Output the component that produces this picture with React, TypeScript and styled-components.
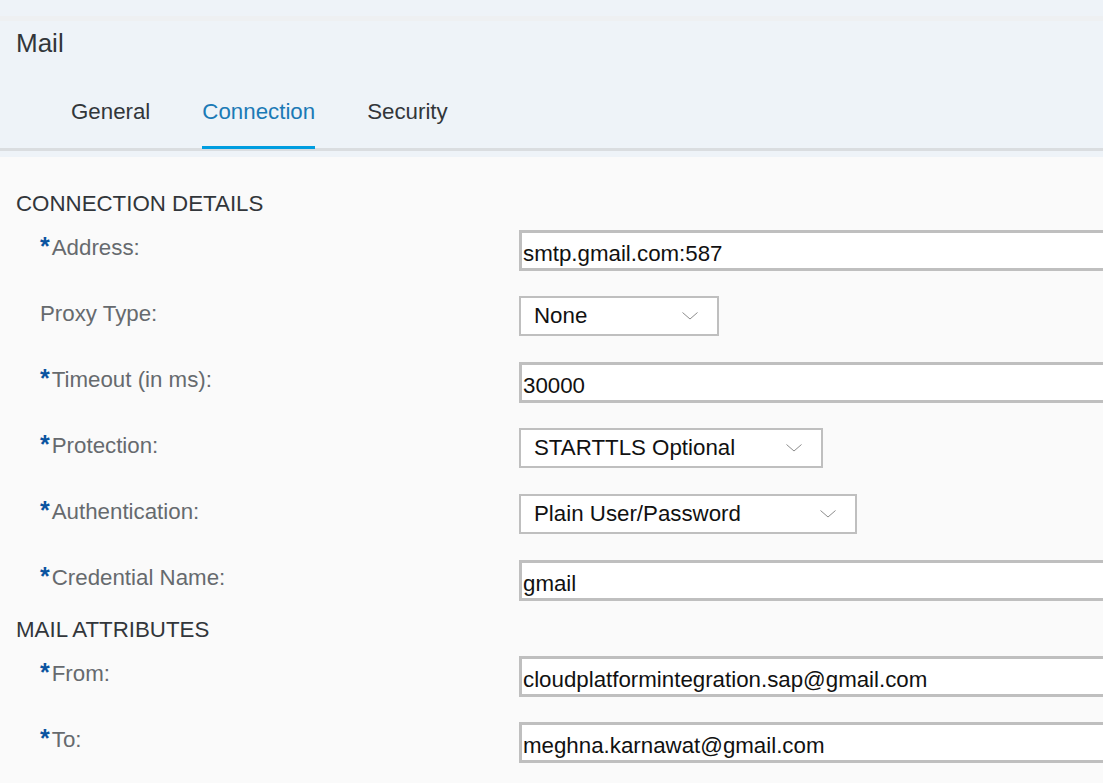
import React from 'react';
import styled, { createGlobalStyle } from 'styled-components';

const GlobalStyle = createGlobalStyle`
  html, body {
    margin: 0;
    padding: 0;
    background: #fafafa;
    overflow: hidden;
  }
  body {
    font-family: "Liberation Sans", Arial, sans-serif;
  }
`

const Page = styled.div`
  width: 1103px;
  height: 783px;
  overflow: hidden;
  background: #fafafa;
`

const ShellStrip = styled.div`
  height: 16px;
  background: #eef3f8;
  border-bottom: 5px solid #eef0f2;
`

const Header = styled.header`
  background: #eef3f8;
  padding: 6px 0 6px;
`

const Title = styled.h1`
  margin: 0 0 40px 16px;
  font-size: 26px;
  line-height: 32px;
  font-weight: 400;
  color: #32363a;
`

const TabBar = styled.nav`
  display: flex;
  gap: 52px;
  padding-left: 71px;
  border-bottom: 3px solid #dadde0;
`

const Tab = styled.div<{ $active?: boolean }>`
  font-size: 22.3px;
  line-height: 26px;
  padding-bottom: 21px;
  margin-bottom: -1px;
  color: ${(p) => (p.$active ? '#1b7ab6' : '#32363a')};
  border-bottom: 3px solid ${(p) => (p.$active ? '#009de0' : 'transparent')};
`

const Content = styled.main`
  padding-top: 34px;
`

const Section = styled.section<{ $gap?: number }>`
  margin-top: ${(p) => p.$gap || 0}px;
`

const Heading = styled.h2`
  margin: 0 0 13px 16px;
  font-size: 22.3px;
  line-height: 26px;
  font-weight: 400;
  color: #32363a;
  text-transform: uppercase;
`

const FormGrid = styled.div`
  display: grid;
  grid-template-columns: 479px 1fr;
  row-gap: 25px;
  padding-left: 40px;
`

const Label = styled.label`
  padding-top: 5px;
  font-size: 22.3px;
  line-height: 26px;
  color: #666a6e;
`

const Required = styled.span`
  display: inline-block;
  margin-right: 2px;
  font-size: 25px;
  line-height: 20px;
  font-weight: 700;
  color: #0b54a0;
`

const Field = styled.div`
  min-width: 0;
  height: 41px;
`

const TextInput = styled.input`
  box-sizing: border-box;
  display: block;
  width: calc(100% + 40px);
  height: 41px;
  margin: 0;
  padding: 6px 1px 0;
  border: 3px solid #bfbfbf;
  border-radius: 0;
  background: #fff;
  font-family: "Liberation Sans", Arial, sans-serif;
  font-size: 22.3px;
  color: #111;
  outline: none;
`

const SelectBox = styled.div<{ $width: number }>`
  box-sizing: border-box;
  display: flex;
  align-items: center;
  justify-content: space-between;
  width: ${(p) => p.$width}px;
  height: 40px;
  padding: 0 19px 1px 13px;
  border: 2px solid #bfbfbf;
  background: #fff;
  font-size: 22.3px;
  color: #111;
`

const Chevron = () => (
  <svg width="16" height="8" viewBox="0 0 16 8">
    <polyline points="0.5,0.5 8,7 15.5,0.5" fill="none" stroke="#8c8c8c" strokeWidth="1" />
  </svg>
)

type Row = {
  label: string;
  required?: boolean;
  value: string;
  select?: number;
}

const connectionRows: Row[] = [
  { label: 'Address:', required: true, value: 'smtp.gmail.com:587' },
  { label: 'Proxy Type:', value: 'None', select: 200 },
  { label: 'Timeout (in ms):', required: true, value: '30000' },
  { label: 'Protection:', required: true, value: 'STARTTLS Optional', select: 304 },
  { label: 'Authentication:', required: true, value: 'Plain User/Password', select: 338 },
  { label: 'Credential Name:', required: true, value: 'gmail' },
]

const mailRows: Row[] = [
  { label: 'From:', required: true, value: 'cloudplatformintegration.sap@gmail.com' },
  { label: 'To:', required: true, value: 'meghna.karnawat@gmail.com' },
]

function FormRows({ rows }: { rows: Row[] }) {
  return (
    <FormGrid>
      {rows.map((row) => (
        <React.Fragment key={row.label}>
          <Label>
            {row.required && <Required>*</Required>}
            {row.label}
          </Label>
          <Field>
            {row.select ? (
              <SelectBox $width={row.select}>
                <span>{row.value}</span>
                <Chevron />
              </SelectBox>
            ) : (
              <TextInput readOnly defaultValue={row.value} />
            )}
          </Field>
        </React.Fragment>
      ))}
    </FormGrid>
  )
}

export default function App() {
  return (
    <Page>
      <GlobalStyle />
      <ShellStrip />
      <Header>
        <Title>Mail</Title>
        <TabBar>
          <Tab>General</Tab>
          <Tab $active>Connection</Tab>
          <Tab>Security</Tab>
        </TabBar>
      </Header>
      <Content>
        <Section>
          <Heading>Connection Details</Heading>
          <FormRows rows={connectionRows} />
        </Section>
        <Section $gap={16}>
          <Heading>Mail Attributes</Heading>
          <FormRows rows={mailRows} />
        </Section>
      </Content>
    </Page>
  )
}
